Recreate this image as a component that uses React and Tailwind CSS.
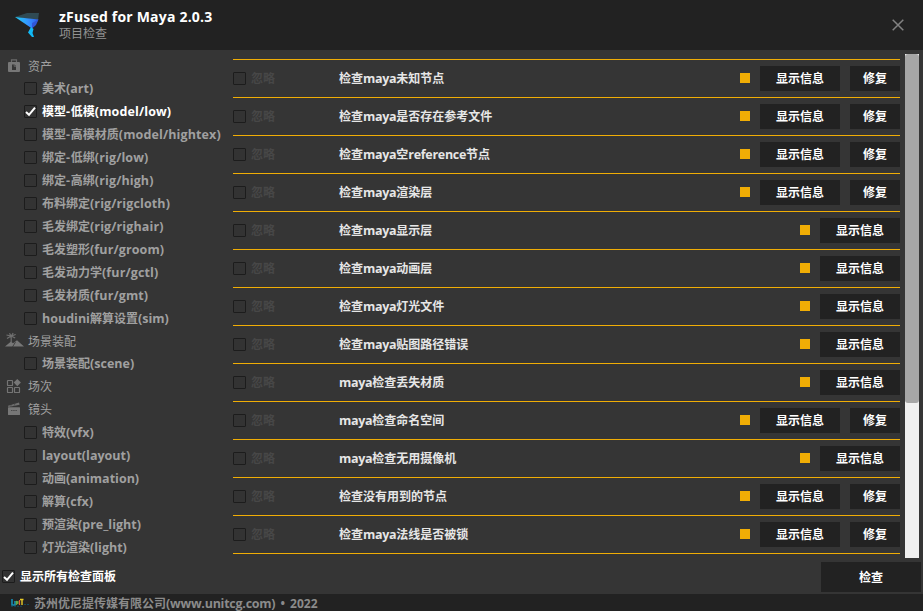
import React from "react";

const groups = [
  {
    name: "资产",
    icon: "asset",
    h: "h-[22px]",
    items: [
      ["美术(art)"],
      ["模型-低模(model/low)", true],
      ["模型-高模材质(model/hightex)"],
      ["绑定-低绑(rig/low)"],
      ["绑定-高绑(rig/high)"],
      ["布料绑定(rig/rigcloth)"],
      ["毛发绑定(rig/righair)"],
      ["毛发塑形(fur/groom)"],
      ["毛发动力学(fur/gctl)"],
      ["毛发材质(fur/gmt)"],
      ["houdini解算设置(sim)"],
    ],
  },
  { name: "场景装配", icon: "scene", h: "h-[22px]", items: [["场景装配(scene)"]] },
  { name: "场次", icon: "blocks", h: "h-[22px]", items: [] },
  {
    name: "镜头",
    icon: "clapper",
    h: "h-[24px]",
    items: [
      ["特效(vfx)"],
      ["layout(layout)"],
      ["动画(animation)"],
      ["解算(cfx)"],
      ["预渲染(pre_light)"],
      ["灯光渲染(light)"],
    ],
  },
];

const checks = [
  ["检查maya未知节点", true],
  ["检查maya是否存在参考文件", true],
  ["检查maya空reference节点", true],
  ["检查maya渲染层", true],
  ["检查maya显示层", false],
  ["检查maya动画层", false],
  ["检查maya灯光文件", false],
  ["检查maya贴图路径错误", false],
  ["maya检查丢失材质", false],
  ["maya检查命名空间", true],
  ["maya检查无用摄像机", false],
  ["检查没有用到的节点", true],
  ["检查maya法线是否被锁", true],
];

// Latin runs are set slightly wider than the ideographs beside them.
function Label({ text, latin = "" }) {
  return text.split(/([\x20-\x7e]+)/).map((part, i) =>
    i % 2 ? (
      <span key={i} className={`text-[12.5px] ${part === "-" ? "tracking-[0.8px]" : latin}`}>
        {part}
      </span>
    ) : (
      part
    )
  );
}

function CheckBox({ checked }) {
  return (
    <span className="flex size-[13px] shrink-0 items-center justify-center rounded-[1px] border border-[#1c1c1c] bg-[#333333]">
      {checked && (
        <svg width="11" height="11" viewBox="0 0 11 11" fill="none" stroke="#fff" strokeWidth="2">
          <path d="M1 6 L4 8.8 L10 1.6" />
        </svg>
      )}
    </span>
  );
}

function GroupIcon({ name }) {
  if (name === "asset")
    return (
      <svg width="20" height="16" viewBox="0 0 20 16" className="mb-[2px] shrink-0">
        <path d="M7.5 5V2.8h5V5" fill="none" stroke="#6a6a6a" strokeWidth="1.2" />
        <rect x="4" y="5" width="12" height="10" rx="1" fill="#777" />
        <path d="M8 7.5h2.5L12 9v4H8z" fill="#353535" />
        <path d="M10.2 7.5V9.3H12" fill="none" stroke="#777" strokeWidth=".7" />
      </svg>
    );
  if (name === "scene")
    return (
      <svg width="20" height="16" viewBox="0 0 20 16" className="mb-[2px] shrink-0">
        <path d="M1 14.5L7 9.5l2 1.8L13 8.3l7 6.2z" fill="#777" />
        <path d="M7.2 10.5V3.5M7.2 4L2.5 3M7.2 4L3 6.5M7.2 4l4.5-1.5M7.2 4l4 2M7 4L5.5 1.2M7.2 4l2-2.8" fill="none" stroke="#707070" strokeWidth="1.2" />
        <path d="M8.5 15L11.5 10" stroke="#353535" strokeWidth=".8" />
      </svg>
    );
  if (name === "blocks")
    return (
      <svg width="20" height="16" viewBox="0 0 20 16" className="shrink-0" fill="none" stroke="#747474" strokeWidth="1.2">
        <rect x="3.5" y="2.5" width="5" height="5" rx=".6" />
        <rect x="3.5" y="9.5" width="5" height="5" rx=".6" />
        <rect x="10.5" y="9.5" width="5" height="5" rx=".6" />
        <path d="M13.3 1l3.6 3.6-3.6 3.6-3.6-3.6z" fill="#777" stroke="none" />
      </svg>
    );
  return (
    <svg width="20" height="16" viewBox="0 0 20 16" className="shrink-0">
      <path d="M4 4.8L15 1.6l.6 2.2L4.4 6z" fill="#707070" />
      <path d="M6.5 5.3l1.2-2M10 4.6l1.2-2.2" stroke="#353535" strokeWidth=".5" />
      <rect x="4" y="6.3" width="12" height="7.7" rx=".5" fill="#777" />
      <path d="M7 9.5h6" stroke="#4a4a4a" strokeDasharray="1.5 .7" />
    </svg>
  );
}

function FlatButton({ className, children }) {
  return (
    <button className={`flex h-[25px] items-center justify-center bg-[#222222] font-bold text-white ${className}`}>
      {children}
    </button>
  );
}

export default function App() {
  return (
    <div className="flex h-[611px] w-[923px] flex-col overflow-hidden bg-[#353535] font-['Open_Sans','Noto_Sans_CJK_SC',sans-serif] text-[12px] leading-[16px] whitespace-nowrap">
      <header className="flex h-[50px] shrink-0 items-start bg-[#222222]">
        <svg width="59" height="50" viewBox="0 0 59 50" className="shrink-0">
          <defs>
            <linearGradient id="wing" x1="0" x2="1">
              <stop offset="0" stopColor="#20d0f5" />
              <stop offset=".55" stopColor="#3595ff" />
              <stop offset="1" stopColor="#315cf0" />
            </linearGradient>
          </defs>
          <path d="M15 17L27 13H39L38 20z" fill="#2f4a54" />
          <path d="M15 17L38.5 19.5L32 28.5z" fill="url(#wing)" />
          <path d="M38.5 19.5L36 25L32 28.5V23z" fill="#3157d8" />
          <path d="M31 27L33.5 29L32.5 33L34 37H32L28 32.5z" fill="#12b9f5" />
        </svg>
        <div className="flex grow flex-col pt-[7px]">
          <h1 className="text-[14px] leading-[20px] font-bold tracking-[0.2px] text-white">zFused for Maya 2.0.3</h1>
          <p className="leading-[14px] text-[#929292]">项目检查</p>
        </div>
        <svg width="12" height="12" viewBox="0 0 12 12" className="mt-[19px] mr-[19px]" stroke="#828282" strokeWidth="1.5">
          <path d="M.7.7l10.6 10.6M11.3.7L.7 11.3" />
        </svg>
      </header>

      <main className="flex h-[509px] shrink-0">
        <nav className="w-[233px] shrink-0 pt-[5px] text-[#a0a0a0]">
          {groups.map((g) => (
            <section key={g.name}>
              <div className={`flex items-center gap-[4px] pl-[4px] ${g.h}`}>
                <GroupIcon name={g.icon} />
                <span className="pt-[2px]">{g.name}</span>
              </div>
              {g.items.map(([text, on]) => (
                <div key={text} className={`flex h-[23px] items-center gap-[5px] pl-[24px] font-bold ${on ? "text-white" : ""}`}>
                  <CheckBox checked={on} />
                  <span>
                    <Label text={text} latin={text.includes("/") ? "tracking-[0.12px]" : ""} />
                  </span>
                </div>
              ))}
            </section>
          ))}
        </nav>
        <div className="mt-[9px] w-[667px] shrink-0 self-start border-t border-[#f0ad05]">
          {checks.map(([text, fix]) => (
            <div key={text} className="flex h-[38px] items-center border-b border-[#f0ad05]">
              <CheckBox />
              <span className="ml-[5px] w-[88px] font-bold text-[#474747]">忽略</span>
              <span className="grow font-bold text-[#e6e6e6]">
                <Label text={text} latin="tracking-[-0.3px]" />
              </span>
              <i className="mr-[10px] mb-[1px] size-[10px] bg-[#f0ad05]" />
              <FlatButton className="w-[80px]">显示信息</FlatButton>
              {fix && <FlatButton className="ml-[10px] w-[50px]">修复</FlatButton>}
            </div>
          ))}
        </div>
        <div className="mt-[4px] ml-[5px] h-[504px] w-[14px] bg-[#f0f0f0]">
          <div className="h-[349px] rounded-[3px] bg-[#a6a6a6]" />
        </div>
      </main>

      <div className="flex h-[35px] shrink-0 items-start justify-between pr-[2px] pl-[2px]">
        <label className="flex h-[35px] items-center gap-[5px] font-bold text-white">
          <CheckBox checked />
          <span>显示所有检查面板</span>
        </label>
        <button className="mt-[3px] h-[30px] w-[100px] bg-[#222222] pt-[1px] font-bold text-white">检查</button>
      </div>

      <footer className="flex h-[17px] shrink-0 items-start bg-[#222222] pt-[2px] font-bold text-[#8b8b8b]">
        <svg width="34" height="14" viewBox="0 0 34 14" className="shrink-0" fill="none">
          <path d="M12 3v6h3V5" stroke="#168eb5" strokeWidth="1.6" />
          <path d="M16.3 9V5l1.6 3V5" stroke="#65a947" strokeWidth="1.2" />
          <path d="M19.5 9V4" stroke="#e75b32" strokeWidth="1.2" />
          <path d="M20 3.5h3.5M22 3.5V9" stroke="#e9cc25" strokeWidth="1.4" />
          <path d="M11 10.3h12M24 8.5h5" stroke="#17485a" strokeDasharray="2 1" />
        </svg>
        <span>
          <Label text="苏州优尼提传媒有限公司(www.unitcg.com)" latin="tracking-[-0.25px]" />
          <span className="[word-spacing:2px]"> • 2022</span>
        </span>
      </footer>
    </div>
  );
}
